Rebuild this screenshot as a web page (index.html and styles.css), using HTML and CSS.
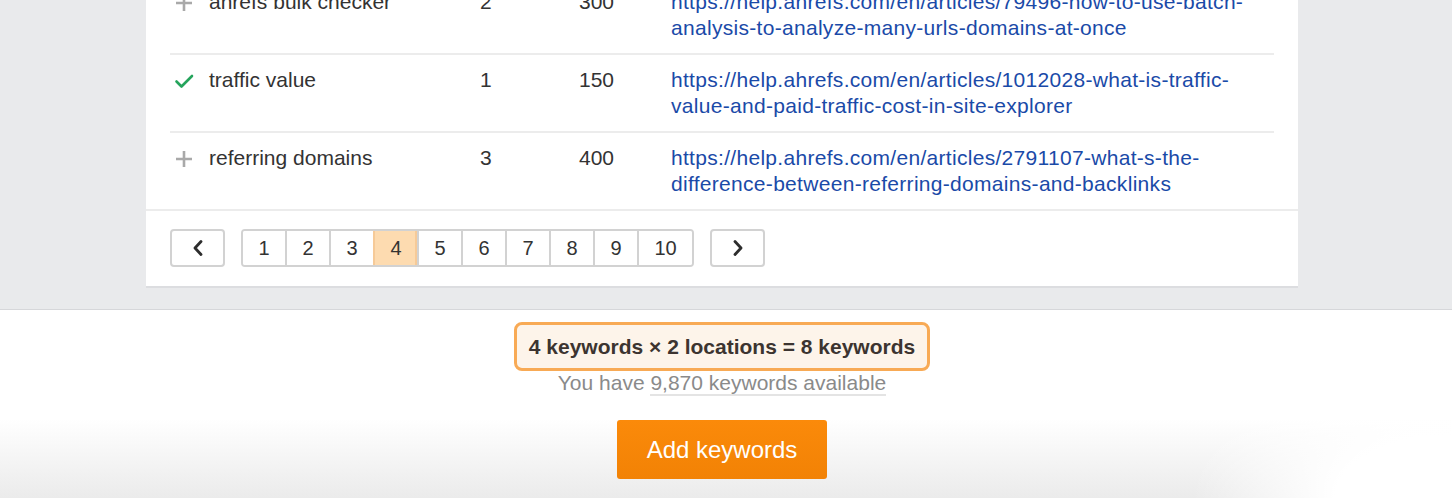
FILE: index.html
```html
<!DOCTYPE html>
<html>
<head>
<meta charset="utf-8">
<link rel="stylesheet" href="styles.css">
</head>
<body>
<div class="page">
  <section class="top">
    <div class="card">
      <div class="table">
        <div class="row">
          <div class="ico"><svg class="plus" viewBox="0 0 20 20"><path d="M10 2v16M2 10h16"/></svg></div>
          <div class="kw">ahrefs bulk checker</div>
          <div class="num">2</div>
          <div class="vol">300</div>
          <div class="url"><a href="#">https://help.ahrefs.com/en/articles/79496-how-to-use-batch-analysis-to-analyze-many-urls-domains-at-once</a></div>
        </div>
        <div class="row">
          <div class="ico"><svg class="check" viewBox="0 0 20 20"><path d="M2.5 10.5l5 5L18 5"/></svg></div>
          <div class="kw">traffic value</div>
          <div class="num">1</div>
          <div class="vol">150</div>
          <div class="url"><a href="#">https://help.ahrefs.com/en/articles/1012028-what-is-traffic-value-and-paid-traffic-cost-in-site-explorer</a></div>
        </div>
        <div class="row">
          <div class="ico"><svg class="plus" viewBox="0 0 20 20"><path d="M10 2v16M2 10h16"/></svg></div>
          <div class="kw">referring domains</div>
          <div class="num">3</div>
          <div class="vol">400</div>
          <div class="url"><a href="#">https://help.ahrefs.com/en/articles/2791107-what-s-the-difference-between-referring-domains-and-backlinks</a></div>
        </div>
      </div>
      <nav class="pager">
        <button class="nav-btn" aria-label="Previous"><svg viewBox="0 0 12 18"><path d="M9 2.5L3 9l6 6.5"/></svg></button>
        <div class="pages">
          <button class="pg">1</button>
          <button class="pg">2</button>
          <button class="pg">3</button>
          <button class="pg active">4</button>
          <button class="pg">5</button>
          <button class="pg">6</button>
          <button class="pg">7</button>
          <button class="pg">8</button>
          <button class="pg">9</button>
          <button class="pg wide">10</button>
        </div>
        <button class="nav-btn" aria-label="Next"><svg viewBox="0 0 12 18"><path d="M3 2.5L9 9l-6 6.5"/></svg></button>
      </nav>
    </div>
  </section>
  <footer class="footer">
    <div class="summary">4 keywords × 2 locations = 8 keywords</div>
    <div class="avail">You have <span class="avail-link">9,870 keywords available</span></div>
    <button class="add">Add keywords</button>
  </footer>
</div>
</body>
</html>
```

FILE: styles.css
```css
* { box-sizing: border-box; }
html, body { margin: 0; padding: 0; }
body {
  font-family: "Liberation Sans", Arial, Helvetica, sans-serif;
  color: #333;
  width: 1452px;
  height: 498px;
  overflow: hidden;
}
.page {
  height: 498px;
  display: flex;
  flex-direction: column;
  overflow: hidden;
}
.top {
  background: #e9eaec;
  height: 310px;
  flex: none;
  border-bottom: 1px solid #d6d7da;
  overflow: hidden;
}
.card {
  width: 1152px;
  margin: -23px 0 0 146px;
  background: #fff;
  border-bottom: 2px solid #dcdde0;
}
.table {
  padding: 0 24px;
  border-bottom: 2px solid #ececec;
}
.row {
  display: grid;
  grid-template-columns: 39px 271px 99px 92px 1fr;
  padding: 12px 0;
  font-size: 21px;
  line-height: 26px;
  color: #333;
  border-bottom: 2px solid #ececec;
  height: 78px;
}
.row:last-child { border-bottom: none; height: 76px; }
.ico {
  display: flex;
  align-items: flex-start;
  padding: 4px 0 0 4px;
}
.ico svg {
  width: 20px;
  height: 20px;
  fill: none;
}
.plus path { stroke: #a9a9a9; stroke-width: 2.6; }
.check path { stroke: #25a45c; stroke-width: 2.6; stroke-linecap: round; stroke-linejoin: round; }
.url { padding-right: 10px; }
.url a {
  color: #1a4aa8;
  text-decoration: none;
  letter-spacing: 0.3px;
}
.pager {
  display: flex;
  align-items: center;
  gap: 16px;
  padding: 18px 0 19px 24px;
}
button {
  font-family: inherit;
  cursor: pointer;
}
.nav-btn {
  width: 55px;
  height: 38px;
  background: #fff;
  border: 2px solid #d2d2d2;
  border-radius: 4px;
  display: flex;
  align-items: center;
  justify-content: center;
  padding: 0;
}
.nav-btn svg {
  width: 12px;
  height: 18px;
  fill: none;
}
.nav-btn path {
  stroke: #2d2d2d;
  stroke-width: 2.8;
  stroke-linecap: round;
  stroke-linejoin: round;
}
.pages {
  display: flex;
  border: 2px solid #d2d2d2;
  border-radius: 4px;
  overflow: hidden;
  height: 38px;
}
.pg {
  width: 44px;
  height: 34px;
  border: none;
  border-left: 2px solid #d2d2d2;
  background: #fff;
  font-size: 20px;
  color: #333;
  padding: 0;
}
.pg:first-child { border-left: none; width: 42px; }
.pg.wide { width: 55px; }
.pg.active {
  background: #fddbb0;
  border-left-color: #f6ca98;
  box-shadow: inset -2px 0 0 #f6ca98;
}
.footer {
  flex: 1;
  display: flex;
  flex-direction: column;
  align-items: center;
  padding: 12px 8px 0 0;
  background:
    radial-gradient(ellipse 260px 140px at 100% 100%, #fff 45%, rgba(255,255,255,0) 100%),
    linear-gradient(to bottom, #fff 0%, #fff 58%, #ebebeb 100%);
}
.summary {
  border: 3px solid #f8aa55;
  background: #fdf4ea;
  border-radius: 8px;
  height: 49px;
  padding: 0 12px;
  display: flex;
  align-items: center;
  font-size: 21px;
  font-weight: bold;
  color: #3c3430;
}
.avail {
  font-size: 21px;
  line-height: 24px;
  color: #8a8a8a;
}
.avail-link {
  border-bottom: 2px solid #e4e4e4;
}
.add {
  margin-top: 25px;
  width: 210px;
  height: 59px;
  border: none;
  border-radius: 3px;
  background: linear-gradient(to bottom, #fb8a0a, #f28205);
  color: #fff;
  font-size: 24px;
  padding: 0;
}
```
